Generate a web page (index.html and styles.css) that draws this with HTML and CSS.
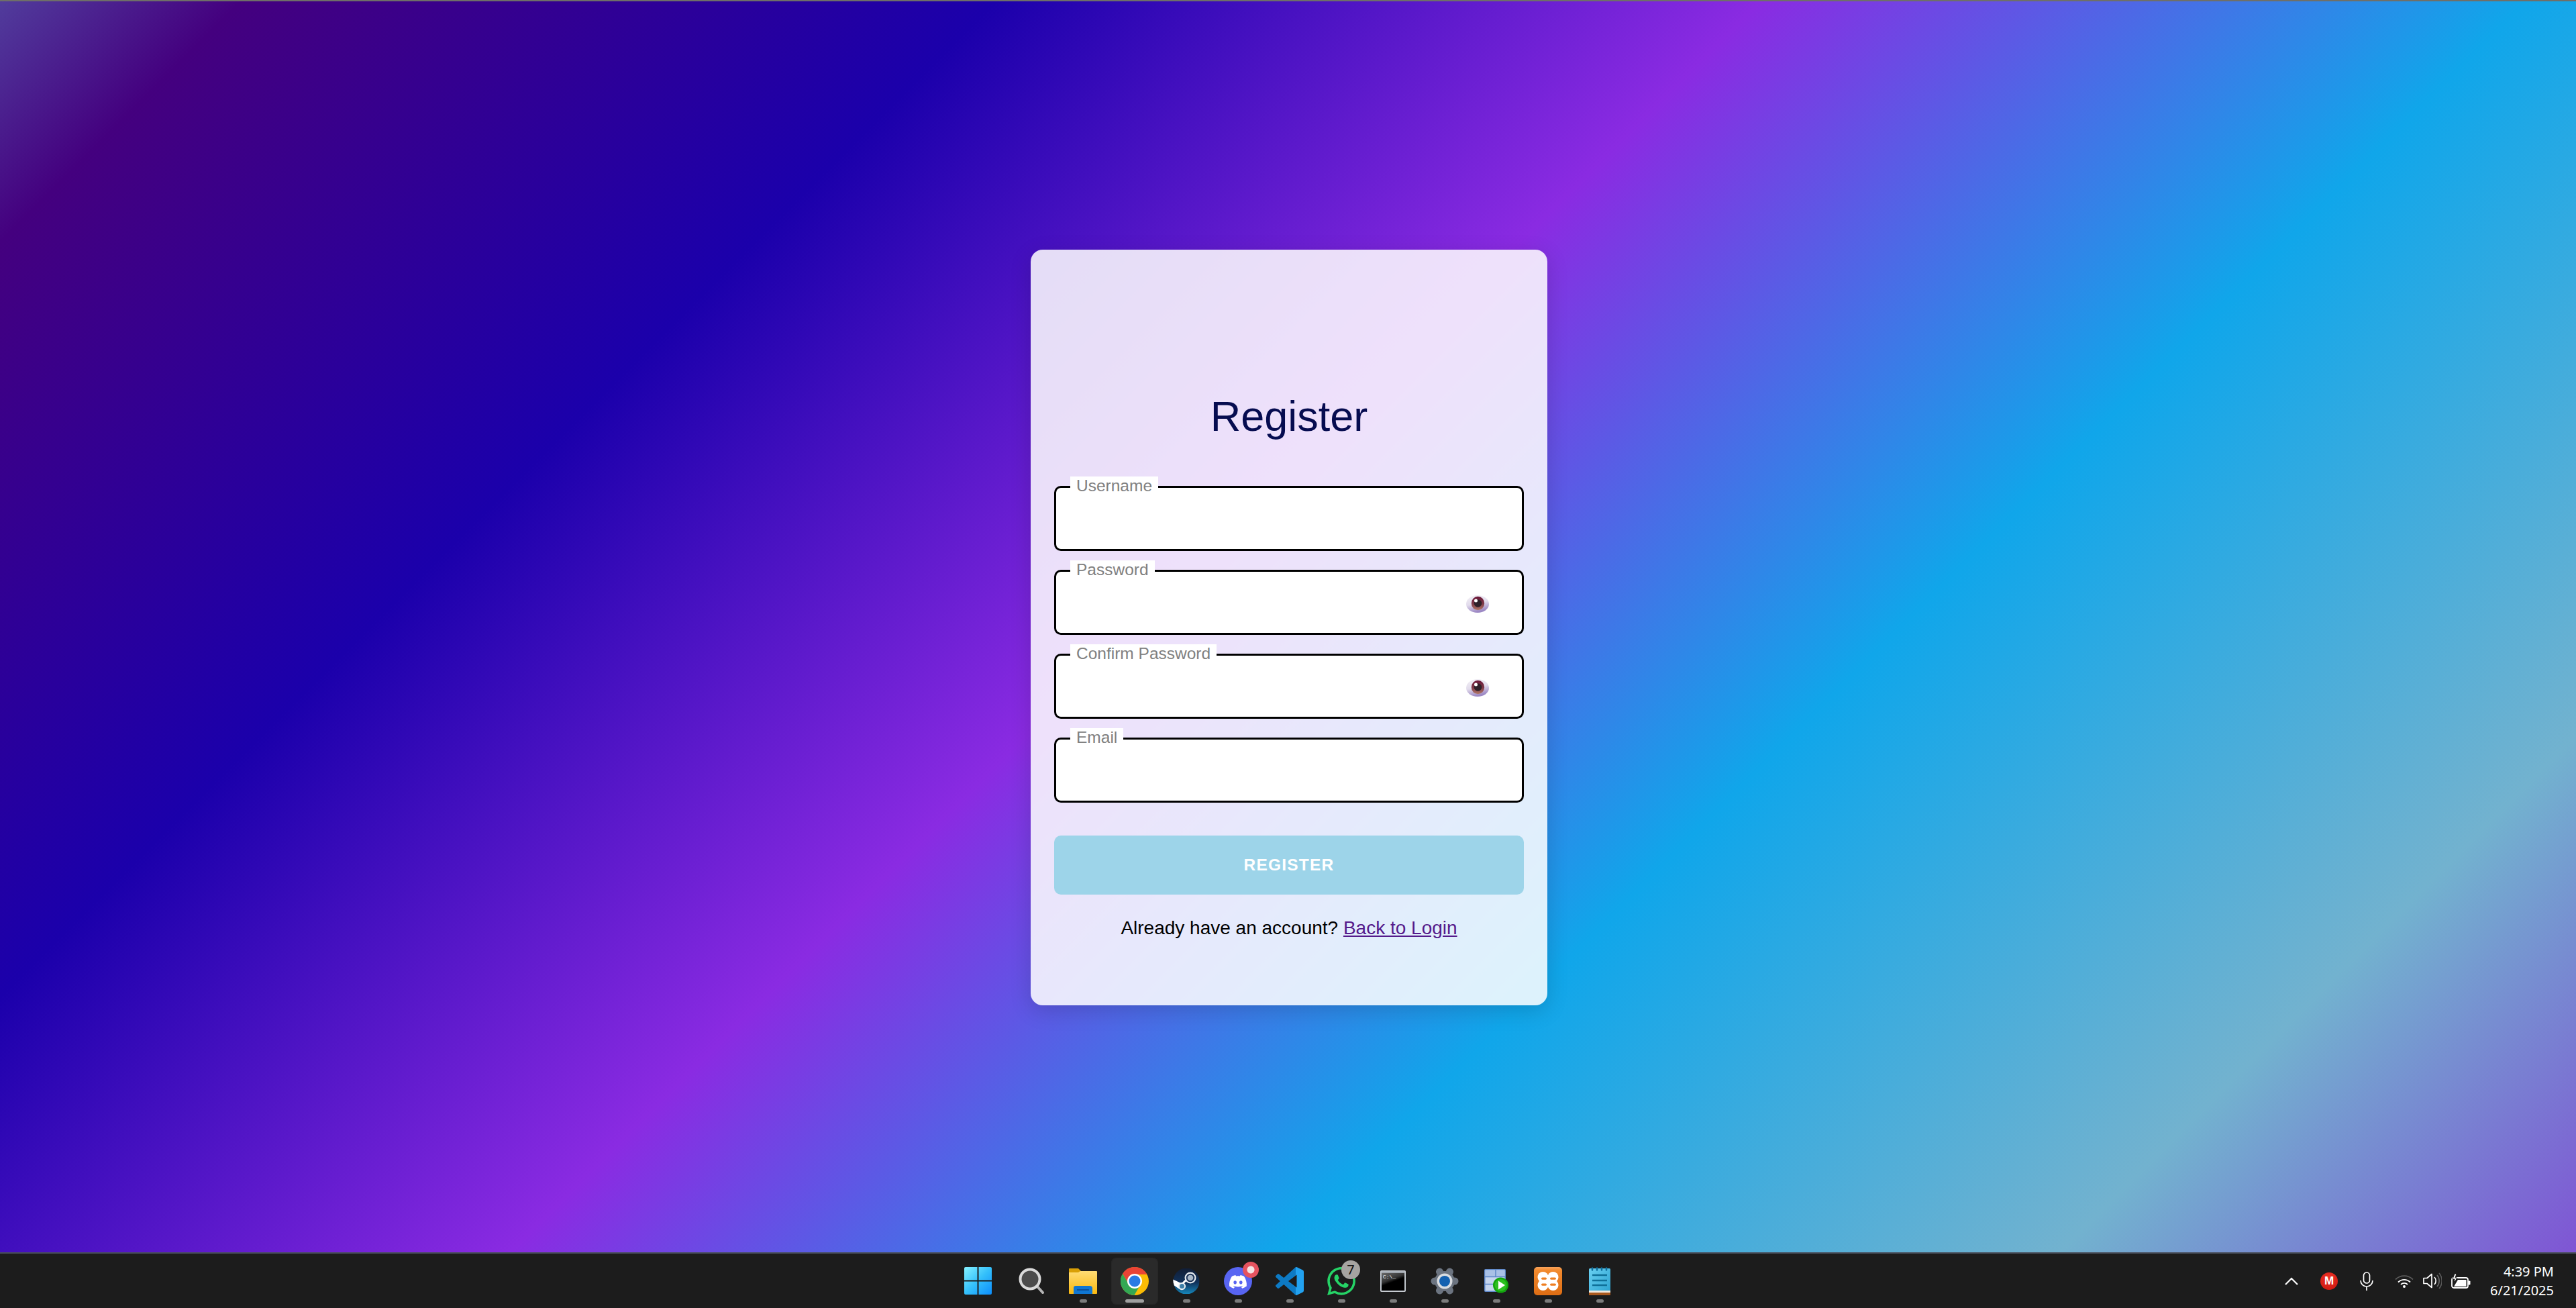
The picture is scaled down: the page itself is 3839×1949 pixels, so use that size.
FILE: index.html
```html
<!DOCTYPE html>
<html lang="en">
<head>
<meta charset="utf-8">
<title>Register</title>
<link rel="stylesheet" href="styles.css">
</head>
<body>
<main class="desktop">
  <form class="card">
    <h1 class="title">Register</h1>
    <div class="field"><span class="label">Username</span></div>
    <div class="field"><span class="label">Password</span>
      <svg class="eye" width="34" height="26" viewBox="0 0 34 26"><defs><linearGradient id="ew" x1="0" y1="0" x2=".3" y2="1"><stop offset="0" stop-color="#f4f2f6"/><stop offset=".55" stop-color="#e2dcec"/><stop offset="1" stop-color="#9c88c4"/></linearGradient><linearGradient id="ei" x1="0" y1="0" x2="0" y2="1"><stop offset="0" stop-color="#6a1638"/><stop offset=".55" stop-color="#7f3a48"/><stop offset="1" stop-color="#b27a68"/></linearGradient></defs><ellipse cx="17" cy="13" rx="17" ry="13" fill="url(#ew)"/><ellipse cx="17.500" cy="12" rx="9.700" ry="10.200" fill="url(#ei)"/><circle cx="17.500" cy="12" r="5.800" fill="#2e2029"/><circle cx="14.500" cy="8" r="2.500" fill="#fff"/></svg>
    </div>
    <div class="field"><span class="label">Confirm Password</span>
      <svg class="eye" width="34" height="26" viewBox="0 0 34 26"><ellipse cx="17" cy="13" rx="17" ry="13" fill="url(#ew)"/><ellipse cx="17.500" cy="12" rx="9.700" ry="10.200" fill="url(#ei)"/><circle cx="17.500" cy="12" r="5.800" fill="#2e2029"/><circle cx="14.500" cy="8" r="2.500" fill="#fff"/></svg>
    </div>
    <div class="field"><span class="label">Email</span></div>
    <button class="submit" type="button">REGISTER</button>
    <p class="foot">Already have an account? <a class="link" href="#">Back to Login</a></p>
  </form>
</main>
<footer class="taskbar">
  <div class="apps">
    <div class="app app-start"><svg width="41" height="41" viewBox="0 0 41 41"><defs><linearGradient id="wg" x1="0" y1="0" x2="1" y2="1"><stop offset="0" stop-color="#86f2ff"/><stop offset=".5" stop-color="#34c0fb"/><stop offset="1" stop-color="#0c8dfb"/></linearGradient></defs><path fill="url(#wg)" d="M2 0h17.500v19.500H0V2a2 2 0 0 1 2-2zM21.500 0H39a2 2 0 0 1 2 2v17.500H21.500zM0 21.500h19.500V41H2a2 2 0 0 1-2-2zM21.500 21.500H41V39a2 2 0 0 1-2 2H21.500z"/></svg></div>
    <div class="app"><svg width="38" height="39" viewBox="0 0 38 39"><line x1="27" y1="27" x2="36" y2="37" stroke="#b5b5b5" stroke-width="4" stroke-linecap="round"/><circle cx="17" cy="17" r="14.500" fill="#4c4c4c" stroke="#dadada" stroke-width="4"/></svg></div>
    <div class="app has-dot"><svg width="42" height="38" viewBox="0 0 42 38"><defs><linearGradient id="fg" x1="0" y1="0" x2="0" y2="1"><stop offset="0" stop-color="#ffdc74"/><stop offset="1" stop-color="#f9b80f"/></linearGradient></defs><path fill="#d99f06" d="M1 0h13l4 4h23v10H0V1a1 1 0 0 1 1-1z"/><path fill="url(#fg)" d="M0 6h14l3-2h24a1 1 0 0 1 1 1v32a1 1 0 0 1-1 1H1a1 1 0 0 1-1-1z"/><path fill="#0f76d2" d="M10 26h21a4 4 0 0 1 4 4v8H7v-9a3 3 0 0 1 3-3z"/><rect x="12" y="31" width="18" height="2" fill="#0a4f9a"/></svg></div>
    <div class="app app-active"><svg width="42" height="42" viewBox="0 0 42 42"><circle cx="21" cy="21" r="21" fill="#fbbc04"/><path fill="#ea4335" d="M21 11h18.500A21 21 0 0 0 3.090 9.980L12.340 26z"/><path fill="#34a853" d="M12.340 26 3.090 9.980A21 21 0 0 0 20.410 42L29.660 26z"/><circle cx="21" cy="21" r="11" fill="#fff"/><circle cx="21" cy="21" r="8.500" fill="#2a7ae4"/></svg></div>
    <div class="app has-dot"><svg width="40" height="38" viewBox="0 0 40 38"><defs><linearGradient id="sg" x1="0" y1="0" x2="0" y2="1"><stop offset="0" stop-color="#111d35"/><stop offset=".55" stop-color="#10315a"/><stop offset="1" stop-color="#1689bd"/></linearGradient></defs><circle cx="20" cy="19" r="19.500" fill="url(#sg)"/><path fill="#fff" d="M.3 16.500 11 21.500l5-.5 3 6-5.500 5.500-5-2.500L2 25.500A19 19 0 0 1 .3 16.500z"/><circle cx="13.500" cy="26.500" r="4.500" fill="#3d7fa8" stroke="#e8eef2" stroke-width="2"/><path d="M15 22 22 15" stroke="#fff" stroke-width="3"/><circle cx="26" cy="14" r="8.500" fill="#e6ebf0"/><circle cx="26" cy="14" r="6.300" fill="#1c3358"/><circle cx="26" cy="14" r="4.300" fill="#a9b8c8"/></svg></div>
    <div class="app has-dot"><svg class="discord" width="42" height="42" viewBox="0 0 42 42"><circle cx="21" cy="21" r="21" fill="#5865f2"/><g transform="translate(8 9) scale(1.08)"><path fill="#fff" d="M20.317 4.3698a19.7913 19.7913 0 00-4.8851-1.5152.0741.0741 0 00-.0785.0371c-.211.3753-.4447.8648-.6083 1.2495-1.8447-.2762-3.68-.2762-5.4868 0-.1636-.3933-.4058-.8742-.6177-1.2495a.077.077 0 00-.0785-.037 19.7363 19.7363 0 00-4.8852 1.515.0699.0699 0 00-.0321.0277C.5334 9.0458-.319 13.5799.0992 18.0578a.0824.0824 0 00.0312.0561c2.0528 1.5076 4.0413 2.4228 5.9929 3.0294a.0777.0777 0 00.0842-.0276c.4616-.6304.8731-1.2952 1.226-1.9942a.076.076 0 00-.0416-.1057c-.6528-.2476-1.2743-.5495-1.8722-.8923a.077.077 0 01-.0076-.1277c.1258-.0943.2517-.1923.3718-.2914a.0743.0743 0 01.0776-.0105c3.9278 1.7933 8.18 1.7933 12.0614 0a.0739.0739 0 01.0785.0095c.1202.099.246.1981.3728.2924a.077.077 0 01-.0066.1276 12.2986 12.2986 0 01-1.873.8914.0766.0766 0 00-.0407.1067c.3604.698.7719 1.3628 1.225 1.9932a.076.076 0 00.0842.0286c1.961-.6067 3.9495-1.5219 6.0023-3.0294a.077.077 0 00.0313-.0552c.5004-5.177-.8382-9.6739-3.5485-13.6604a.061.061 0 00-.0312-.0286zM8.02 15.3312c-1.1825 0-2.1569-1.0857-2.1569-2.419 0-1.3332.9555-2.4189 2.157-2.4189 1.2108 0 2.1757 1.0952 2.1568 2.419 0 1.3332-.9555 2.4189-2.1569 2.4189zm7.9748 0c-1.1825 0-2.1569-1.0857-2.1569-2.419 0-1.3332.9554-2.4189 2.1569-2.4189 1.2108 0 2.1757 1.0952 2.1568 2.419 0 1.3332-.946 2.4189-2.1568 2.4189Z"/></g></svg><span class="badge badge-red"></span></div>
    <div class="app has-dot"><svg width="42" height="42" viewBox="0 0 24 24"><defs><linearGradient id="vg" x1="0" y1="0" x2="1" y2="0"><stop offset=".72" stop-color="#0d7ac4"/><stop offset=".72" stop-color="#22a2f0"/></linearGradient></defs><path fill="url(#vg)" d="M23.15 2.587L18.21.21a1.494 1.494 0 0 0-1.705.29l-9.46 8.63-4.12-3.128a.999.999 0 0 0-1.276.057L.327 7.261A1 1 0 0 0 .326 8.74L3.899 12 .326 15.26a1 1 0 0 0 .001 1.479L1.65 17.94a.999.999 0 0 0 1.276.057l4.12-3.128 9.46 8.63a1.492 1.492 0 0 0 1.704.29l4.942-2.377A1.5 1.5 0 0 0 24 20.06V3.939a1.5 1.5 0 0 0-.85-1.352zm-5.146 14.861L10.826 12l7.178-5.448v10.896z"/></svg></div>
    <div class="app has-dot"><svg width="42" height="42" viewBox="0 0 24 24"><path fill="#25d366" d="M17.472 14.382c-.297-.149-1.758-.867-2.03-.967-.273-.099-.471-.148-.67.15-.197.297-.767.966-.94 1.164-.173.199-.347.223-.644.075-.297-.15-1.255-.463-2.39-1.475-.883-.788-1.48-1.761-1.653-2.059-.173-.297-.018-.458.13-.606.134-.133.298-.347.446-.52.149-.174.198-.298.298-.497.099-.198.05-.371-.025-.52-.075-.149-.669-1.612-.916-2.207-.242-.579-.487-.5-.669-.51-.173-.008-.371-.01-.57-.01-.198 0-.52.074-.792.372-.272.297-1.04 1.016-1.04 2.479 0 1.462 1.065 2.875 1.213 3.074.149.198 2.096 3.2 5.077 4.487.709.306 1.262.489 1.694.625.712.227 1.36.195 1.871.118.571-.085 1.758-.719 2.006-1.413.248-.694.248-1.289.173-1.413-.074-.124-.272-.198-.57-.347m-5.421 7.403h-.004a9.87 9.87 0 01-5.031-1.378l-.361-.214-3.741.982.998-3.648-.235-.374a9.86 9.86 0 01-1.51-5.26c.001-5.45 4.436-9.884 9.888-9.884 2.64 0 5.122 1.03 6.988 2.898a9.825 9.825 0 012.893 6.994c-.003 5.45-4.437 9.884-9.885 9.884m8.413-18.297A11.815 11.815 0 0012.05 0C5.495 0 .16 5.335.157 11.892c0 2.096.547 4.142 1.588 5.945L.057 24l6.305-1.654a11.882 11.882 0 005.683 1.448h.005c6.554 0 11.89-5.335 11.893-11.893a11.821 11.821 0 00-3.48-8.413Z"/></svg><span class="badge badge-gray">7</span></div>
    <div class="app has-dot"><svg width="38" height="32" viewBox="0 0 38 32"><defs><linearGradient id="cg" x1="0" y1="0" x2=".5" y2="1"><stop offset="0" stop-color="#6a6a6a"/><stop offset=".45" stop-color="#333"/><stop offset=".6" stop-color="#000"/></linearGradient></defs><rect x=".75" y=".75" width="36.500" height="30.500" rx="1" fill="#9fa5ac" stroke="#c8cdd3" stroke-width="1.500"/><rect x="2" y="4" width="34" height="26" fill="url(#cg)"/><text class="cmd-text" x="4" y="12">C:\_</text></svg></div>
    <div class="app has-dot"><svg width="42" height="40" viewBox="0 0 42 40"><g stroke="#6c7480" stroke-width="11" stroke-linecap="round"><line x1="6" y1="20" x2="36" y2="20"/><line x1="13.500" y1="6" x2="28.500" y2="34"/><line x1="28.500" y1="6" x2="13.500" y2="34"/></g><circle cx="21" cy="20" r="15" fill="#6c7480"/><circle cx="21" cy="20" r="11.500" fill="#d9dce0"/><circle cx="21" cy="20" r="8" fill="#1461b0"/></svg></div>
    <div class="app has-dot"><svg width="36" height="36" viewBox="0 0 36 36"><rect x=".75" y=".75" width="30.500" height="32.500" rx="1" fill="#c5d5ee" stroke="#5c86c8" stroke-width="1.500"/><rect x="1.500" y="1.500" width="29" height="10" fill="#a9c1e6"/><path d="M1 11.500h30M1 22.500h30M17 1v10" stroke="#5c86c8" stroke-width="1.500" fill="none"/><circle cx="24.500" cy="24" r="11.500" fill="#12a50c"/><circle cx="24.500" cy="24" r="9" fill="#2cbf1f"/><path fill="#fff" d="M21 17.500 31 24 21 30.500z"/></svg></div>
    <div class="app has-dot"><svg width="42" height="42" viewBox="0 0 42 42"><defs><linearGradient id="xg" x1="0" y1="0" x2="0" y2="1"><stop offset="0" stop-color="#f9a45c"/><stop offset=".12" stop-color="#f28a2e"/><stop offset="1" stop-color="#dd6d14"/></linearGradient></defs><rect width="42" height="42" rx="5" fill="url(#xg)"/><g fill="#fff"><circle cx="13.500" cy="15" r="8"/><circle cx="28.500" cy="15" r="8"/><circle cx="13.500" cy="27" r="8"/><circle cx="28.500" cy="27" r="8"/><rect x="13" y="12" width="16" height="18"/></g><g fill="#ee7f22"><rect x="11" y="15.500" width="8" height="3.200" rx="1.600"/><rect x="24" y="15.500" width="9" height="3.200" rx="1.600"/><rect x="11" y="24.500" width="8" height="3.200" rx="1.600"/><rect x="24" y="24.500" width="9" height="3.200" rx="1.600"/></g></svg></div>
    <div class="app has-dot"><svg width="32" height="42" viewBox="0 0 32 42"><defs><linearGradient id="ng" x1="0" y1="0" x2="1" y2="1"><stop offset="0" stop-color="#69d0f2"/><stop offset="1" stop-color="#2ba2d0"/></linearGradient></defs><rect y="2" width="32" height="36" rx="1.500" fill="url(#ng)"/><rect y="35" width="32" height="3" fill="#f0e9df"/><rect y="38" width="32" height="4" fill="#a9591e"/><path stroke="#0f6f9c" stroke-width="2.500" stroke-linecap="round" d="M5 1.500v3M12 1.500v3M19 1.500v3M26 1.500v3"/><path stroke="#0f7099" stroke-width="2.500" d="M5 12h22M5 20h22M5 27h22"/></svg></div>
  </div>
  <div class="tray">
    <svg class="t-chev" width="20" height="12" viewBox="0 0 20 12"><path d="M1 11 10 2l9 9" fill="none" stroke="#fff" stroke-width="2.200"/></svg>
    <span class="t-mega">M</span>
    <svg class="t-mic" width="20" height="28" viewBox="0 0 20 28"><rect x="5.500" y="1" width="9" height="16" rx="4.500" fill="none" stroke="#fff" stroke-width="1.700"/><path d="M1 13a9 9 0 0 0 18 0M10 22v6" fill="none" stroke="#fff" stroke-width="1.700"/></svg>
    <svg class="t-wifi" width="28" height="20" viewBox="0 0 28 20"><path d="M1 7.500a18.500 18.500 0 0 1 26 0" fill="none" stroke="#5a5a5a" stroke-width="1.800"/><path d="M5 11.500a13 13 0 0 1 18 0M9 15a7 7 0 0 1 10 0" fill="none" stroke="#fff" stroke-width="1.800"/><circle cx="14" cy="18" r="2" fill="#fff"/></svg>
    <svg class="t-vol" width="28" height="25" viewBox="0 0 28 25"><path d="M1 8.500h5l7-6v20l-7-6H1z" fill="none" stroke="#fff" stroke-width="1.700" stroke-linejoin="round"/><path d="M17 7a8 8 0 0 1 0 11" fill="none" stroke="#fff" stroke-width="1.700"/><path d="M21 4a13 13 0 0 1 0 17" fill="none" stroke="#666" stroke-width="1.700"/><path d="M24 1a18 18 0 0 1 0 23" fill="none" stroke="#5a5a5a" stroke-width="1.700"/></svg>
    <svg class="t-bat" width="29" height="22" viewBox="0 0 29 22"><rect x="1" y="6" width="24" height="15" rx="3" fill="none" stroke="#fff" stroke-width="1.800"/><rect x="25.500" y="10.500" width="3" height="6" rx="1" fill="#fff"/><path fill="#fff" d="M4 19 10 9h12.500v10z"/><path fill="#fff" stroke="#1c1c1c" stroke-width="1" d="M5 0 2 8h3l-1 6 5-8H6l2-6z"/></svg>
    <div class="clock"><span>4:39 PM</span><span>6/21/2025</span></div>
  </div>
</footer>
</body>
</html>
```
FILE: styles.css
```css
* { box-sizing: border-box; }
html, body { margin: 0; height: 100%; }
body {
  width: 3839px;
  height: 1949px;
  overflow: hidden;
  display: flex;
  flex-direction: column;
  font-family: "Liberation Sans", Arial, sans-serif;
}
.desktop {
  height: 1866px;
  border-top: 2px solid #6f6f68;
  padding-top: 2px;
  display: flex;
  align-items: center;
  justify-content: center;
  background: linear-gradient(135deg, #513c9c 0%, #44007f 6.300%, #1b00ab 26%, #8a2be2 46%, #10a6ea 66%, #72b2cf 86.500%, #7f55d4 100%);
}
.card {
  width: 770px;
  height: 1126px;
  margin-left: 3px;
  padding: 211px 35px 0;
  border-radius: 18px;
  background: rgba(255, 255, 255, .86);
  box-shadow: 0 8px 32px rgba(0, 0, 0, .15);
  display: flex;
  flex-direction: column;
}
.title {
  margin: 0 0 67px;
  font-size: 63px;
  line-height: 74px;
  font-weight: 400;
  text-align: center;
  color: #060c50;
}
.field {
  position: relative;
  height: 97px;
  margin-bottom: 28px;
  background: #fff;
  border: 3px solid #000;
  border-radius: 10px;
}
.label {
  position: absolute;
  left: 21px;
  top: -17px;
  padding: 0 9px;
  height: 28px;
  line-height: 28px;
  font-size: 24.500px;
  color: #808080;
  background: #fff;
}
.eye {
  position: absolute;
  right: 49px;
  top: 35px;
}
.submit {
  height: 88px;
  margin-top: 21px;
  border: 0;
  border-radius: 10px;
  background: #9dd4e9;
  color: #fff;
  font: 700 24.500px "Liberation Sans", Arial, sans-serif;
  letter-spacing: 1.200px;
}
.foot {
  margin: 34px 0 0;
  text-align: center;
  font-size: 28px;
  line-height: 32px;
  color: #000;
}
.link { color: #551a8b; }
.taskbar {
  height: 83px;
  border-top: 2px solid #484d59;
  background: #1c1c1c;
  display: flex;
  align-items: center;
  padding-left: 1422px;
  position: relative;
  color: #fff;
}
.apps { display: flex; gap: 7px; }
.app {
  position: relative;
  width: 70px;
  height: 70px;
  display: flex;
  align-items: center;
  justify-content: center;
}
.app-start { margin-right: 3px; }
.app-active { background: #2a2a2a; border-radius: 8px; box-shadow: inset 0 0 0 1px #262626; }
.has-dot::after, .app-active::after {
  content: "";
  position: absolute;
  left: 50%;
  bottom: 3px;
  width: 11px;
  height: 5px;
  margin-left: -5.500px;
  border-radius: 3px;
  background: #7c7c7c;
}
.app-active::after { width: 28px; margin-left: -14px; background: #a0a0a0; }
.badge {
  position: absolute;
  display: flex;
  align-items: center;
  justify-content: center;
}
.badge-red {
  right: 4px;
  top: 6px;
  width: 24px;
  height: 24px;
  border-radius: 50%;
  background: radial-gradient(circle, #f3e4e4 0 5px, #e5535f 6px);
}
.badge-gray {
  right: 7px;
  top: 4px;
  width: 28px;
  height: 28px;
  border-radius: 50%;
  background: #a6a4a1;
  color: #111;
  font: 20px "Noto Sans", sans-serif;
}
.cmd-text { font: 8px "Liberation Mono", monospace; fill: #fff; }
.tray {
  position: absolute;
  left: 3405px;
  top: 0;
  height: 81px;
  width: 401px;
  display: flex;
  align-items: center;
}
.t-chev { margin-right: 33px; }
.t-mega {
  width: 26px;
  height: 26px;
  margin-right: 33px;
  border-radius: 50%;
  background: radial-gradient(circle at 50% 30%, #ef3226, #c8140e);
  font: 700 17px/26px "Liberation Sans", sans-serif;
  text-align: center;
}
.t-mic { margin-right: 32px; }
.t-wifi { margin-right: 14px; }
.t-vol { margin-right: 14px; }
.t-bat { margin-right: auto; }
.clock {
  display: flex;
  flex-direction: column;
  align-items: flex-end;
  font: 20px/28px "Noto Sans", sans-serif;
}
```
